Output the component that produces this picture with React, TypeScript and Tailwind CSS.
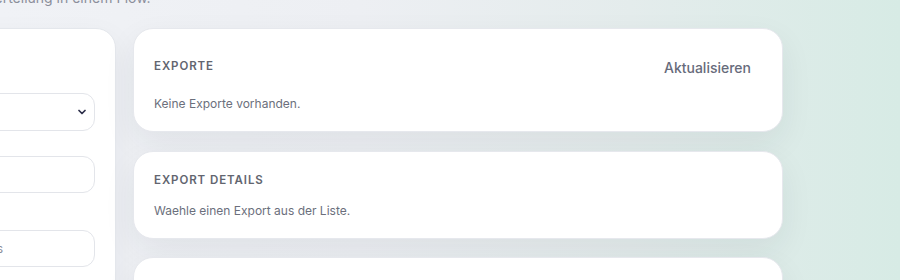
import { ChevronDown } from 'lucide-react';

function Field({ label, children }: { label: string; children: React.ReactNode }) {
  return (
    <div className="flex flex-col gap-2">
      <span className="text-xs font-semibold text-[#6b6f7e]">{label}</span>
      {children}
    </div>
  );
}

function LeftPanel() {
  return (
    <div className="w-[316px] shrink-0 rounded-[20px] border border-[#e4e7ec] bg-white px-5 pt-[40px] pb-6 shadow-[0_12px_32px_rgba(30,41,59,0.06)]">
      <Field label="Quelle">
        <div className="flex h-[38px] items-center justify-between rounded-xl border border-[#e3e5ea] bg-white pl-3 pr-[6px] text-[13px] text-[#3b3d52]">
          <span>Alle</span>
          <ChevronDown size={12} strokeWidth={3.5} className="text-[#2d2f4a]" />
        </div>
      </Field>
      <div className="mt-[25px] h-[37px] rounded-xl border border-[#e3e5ea] bg-white" />
      <div className="mt-[13px]">
        <Field label="Name">
          <div className="flex h-[37px] items-center rounded-xl border border-[#e3e5ea] bg-white pl-[15px] text-[12px] text-[#8a8e9a]">
            Optionaler Name des Exports
          </div>
        </Field>
      </div>
    </div>
  );
}

function Card({ children, className = '' }: { children: React.ReactNode; className?: string }) {
  return (
    <div className={`rounded-[20px] border border-[#e6e8ed] bg-white px-5 py-[19px] shadow-[0_12px_32px_rgba(30,41,59,0.07)] ${className}`}>
      {children}
    </div>
  );
}

const heading = 'text-[11.5px] font-semibold uppercase tracking-[0.08em] text-[#62656f]';
const body = 'text-[12px] leading-4 text-[#6b6f7c]';

export default function App() {
  return (
    <div
      className="h-[280px] w-[900px] overflow-hidden bg-[linear-gradient(90deg,#f0f2f6_0%,#edeff3_40%,#e4ecec_70%,#d7ebe5_100%)]"
      style={{ fontFamily: 'Inter, "Noto Sans", sans-serif' }}
    >
      <div className="-mt-[12px] -ml-[200px]">
        <p className="-ml-[4px] text-[14px] leading-5 text-[#8b8f9b]">
          Vorschau, Aufbereitung und Verteilung in einem Flow.
        </p>
        <div className="mt-5 flex gap-[17px]">
          <LeftPanel />
          <div className="flex w-[650px] flex-col gap-[18px]">
            <Card>
              <div className="flex h-[38px] items-center justify-between">
                <h3 className={heading}>Exporte</h3>
                <button className="px-[11px] text-[14px] font-medium text-[#676b7b]">Aktualisieren</button>
              </div>
              <p className={`mt-[10px] ${body}`}>Keine Exporte vorhanden.</p>
            </Card>
            <Card className="mt-px">
              <h3 className={`${heading} leading-[18px]`}>Export Details</h3>
              <p className={`mt-[14px] ${body}`}>Waehle einen Export aus der Liste.</p>
            </Card>
            <Card>
              <h3 className={`${heading} leading-[18px]`}>Verteilung</h3>
              <p className={`mt-[14px] ${body}`}>Noch keine Empfaenger.</p>
            </Card>
          </div>
        </div>
      </div>
    </div>
  );
}
